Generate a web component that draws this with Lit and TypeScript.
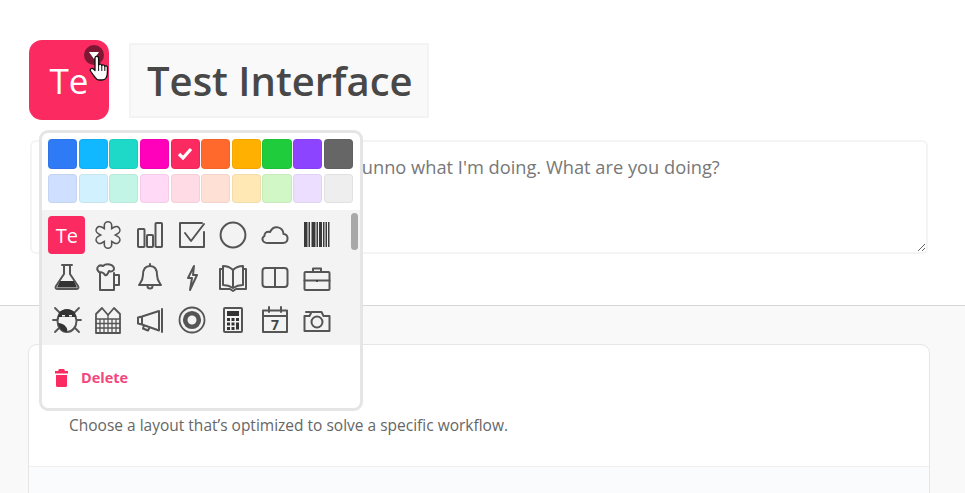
import { LitElement, html, css, svg } from "lit";
import { customElement } from "lit/decorators.js";

const BG = "#f3f3f3";
const icons = [
  svg`<path d="M16 6.500v19M7.800 11.200l16.400 9.600M24.200 11.200L7.800 20.800" stroke="#555" stroke-width="9" stroke-linecap="round"/><path d="M16 6.500v19M7.800 11.200l16.400 9.600M24.200 11.200L7.800 20.800" stroke="${BG}" stroke-width="5.800" stroke-linecap="round"/>`,
  svg`<rect x="4" y="10" width="6.500" height="18" rx=".8"/><rect x="13" y="16" width="6" height="12" rx=".8"/><rect x="21.500" y="4" width="6.500" height="24" rx=".8"/>`,
  svg`<path d="M28 13v15H4V4h22"/><path d="M9 14l6 8L28 5"/>`,
  svg`<circle cx="16" cy="16" r="12.400"/>`,
  svg`<path d="M9 24h15c6 0 6-9 .5-9C24 8 15 5 11 13c-4-1-6 2-5.500 4C2 19 3 24 9 24z"/>`,
  svg`<path fill="#3a3a3a" stroke="none" d="M3 3h3.500v25H3zM7.500 3H9v25H7.500zM10.500 3h4v25h-4zM15.500 3H17v25h-1.500zM18 3h3v25h-3zM22 3h1.500v25H22zM24.500 3H26v25h-1.500zM27 3h1.500v25H27z"/>`,
  svg`<path d="M11 3h10M13 3v9L5 24q-1.500 3 2 3h18q3.500 0 2-3l-8-12V3"/><path fill="#333" stroke="none" d="M9 19h14l3 6.500H6z"/>`,
  svg`<path d="M8 11v17h14V11M22 13h5v10h-5"/><path d="M7 10C3 6 7 2 11 4c3-3 11-2 11 3 0 2-3 3-5 2-1 2-2 5-4 4-1-2-3-3-6-3z"/>`,
  svg`<path d="M16 4c-5 0-7 4-7 9 0 5-2 7-4 10h22c-2-3-4-5-4-10 0-5-2-9-7-9z"/><path d="M13.500 24a2.500 2.500 0 0 0 5 0M16 2v2"/>`,
  svg`<path d="M18 4l-6 12h4l-2 12 7-15h-4z"/>`,
  svg`<path d="M16 8C13 5 9 4 6 4v19c4 0 7 1 10 3 3-2 6-3 10-3V4c-3 0-7 1-10 4zM16 8v18"/><path d="M6 7H3v20h10l3 2 3-2h10V7h-3"/>`,
  svg`<rect x="3.500" y="6" width="25" height="19" rx="3"/><path d="M16 6v19"/>`,
  svg`<rect x="3.500" y="10" width="25" height="18" rx="1"/><path d="M12 10V6.500h8V10M3.500 18.500h25"/><circle cx="16" cy="19" r="1" fill="#333" stroke="none"/>`,
  svg`<path d="M4 4l24 24M28 4L4 28M2 16h28" stroke-width="1.800"/><ellipse cx="16" cy="17" rx="9.500" ry="11" fill="${BG}"/><path fill="#333" stroke="none" d="M8 9c3-5 13-5 16 0l1 4H7zM7 19c3 0 6 1 8 4 2 2 1 4 1 5-5 0-8-4-9-9z"/><path fill="${BG}" stroke="none" d="M11 11h3v1.500h-3zM18 11h3v1.500h-3z"/>`,
  svg`<path d="M4 29V10l6-6 6 7 6-7 6 6v19z" stroke-width="1.800"/><path d="M4 15h24M4 19.500h24M4 24h24M8 15v14M12 15v14M16 11v18M20 15v14M24 15v14" stroke-width="1.300"/>`,
  svg`<path d="M4 13.500v6l4 1 17 6V7L8 12.500zM8 12.500v8M28 5v23M10 21.500l-1 3 5 2 1.500-3"/>`,
  svg`<circle cx="16" cy="16" r="12.500" stroke-width="1.800"/><circle cx="16" cy="16" r="6.800" stroke-width="4.600"/>`,
  svg`<rect x="7" y="4" width="18" height="24" rx="1"/><path fill="#333" stroke="none" d="M10 7h12v5H10zM10 14h3v3h-3zM14.500 14h3v3h-3zM19 14h3v3h-3zM10 18.500h3v3h-3zM14.500 18.500h3v3h-3zM19 18.500h3v7h-3zM10 23h3v3h-3zM14.500 23h3v3h-3z"/>`,
  svg`<path d="M4 6.500h24V28H4zM4 12h24M10 3v5M22 3v5"/><text x="16" y="25.500" text-anchor="middle" class="seven">7</text>`,
  svg`<path d="M3.500 12h5l2-4h10l2 4H28.500v15h-25zM5 8h4"/><circle cx="16" cy="18" r="5.500"/>`,
];

const strong = ["#2f7bf5", "#12b8ff", "#1ed8c8", "#ff00bb", "#fb2a60", "#ff6a2c", "#ffb000", "#1fcc3c", "#8c44ff", "#666666"];
const pale = ["#cfdfff", "#d0f1fd", "#c2f5e6", "#ffd9f5", "#ffdbe5", "#ffe0d5", "#ffe8b3", "#d1f7c6", "#ecdeff", "#eeeeee"];

@customElement("app-root")
export class AppRoot extends LitElement {
  static styles = css`
    :host {
      display: block;
      height: 493px;
      overflow: hidden;
      background: #fff;
      font-family: "Open Sans", sans-serif;
      position: relative;
    }
    .top { padding: 40px 37px 51px 29px; height: 305px; box-sizing: border-box; }
    .head { display: flex; align-items: center; gap: 20px; height: 80px; }
    .logo {
      position: relative;
      width: 80px; height: 80px;
      border-radius: 13px;
      background: #fb2a60;
      color: #fff;
      font-size: 35px;
      display: flex; align-items: center; justify-content: center;
      flex: none;
    }
    .toggle {
      position: absolute; left: 55px; top: 5px;
      width: 20px; height: 20px; border-radius: 50%;
      background: #7d1733;
      display: flex; align-items: center; justify-content: center;
    }
    .toggle i {
      width: 0; height: 0;
      border-left: 5px solid transparent;
      border-right: 5px solid transparent;
      border-top: 7px solid #fff;
      margin-top: 1px;
    }
    .hand { position: absolute; left: 60px; top: 15px; width: 20px; height: 26px; }
    .title {
      box-sizing: border-box;
      width: 300px; height: 75px;
      background: #f9f9f9;
      border: 2px solid #f3f3f3;
      color: #484848;
      font-size: 40px;
      font-weight: 600;
      padding: 1px 0 0 16px;
      display: flex; align-items: center;
      white-space: nowrap;
    }
    textarea {
      display: block;
      box-sizing: border-box;
      margin: 20px 0 0 1px;
      width: 898px; height: 114px;
      border: 2px solid #f4f4f4;
      border-radius: 6px;
      padding: 12px 16px;
      font: 18.250px "Open Sans", sans-serif;
      color: #777;
      background: #fff;
      outline: none;
      resize: both;
    }
    .lower {
      height: 188px;
      box-sizing: border-box;
      background: #f9f9f9;
      border-top: 1px solid #d6d6d6;
      padding: 38px 35px 0 28px;
    }
    .card {
      background: #fff;
      border: 1px solid #e6e6e6;
      border-radius: 9px 9px 0 0;
      height: 200px;
    }
    .desc {
      box-sizing: border-box;
      height: 122px;
      padding: 69px 0 0 40px;
      font-size: 15.500px;
      line-height: 22px;
      color: #666;
      border-bottom: 1px solid #f0f0f0;
    }
    .foot { height: 80px; background: #fafbfd; }
    .pop {
      position: absolute; left: 39px; top: 130px;
      box-sizing: border-box;
      width: 324px; height: 281px;
      background: #fff;
      border: 3px solid #e5e5e5;
      border-radius: 9px;
      display: flex; flex-direction: column;
      overflow: hidden;
    }
    .swatches {
      display: grid;
      grid-template-columns: repeat(10, 29.2px);
      grid-auto-rows: 29.5px;
      column-gap: 1.450px;
      row-gap: 5px;
      padding: 6px 0 7px 6px;
    }
    .sw {
      box-sizing: border-box;
      border-radius: 4px;
      border: 1px solid rgba(0,0,0,.05);
      display: flex; align-items: center; justify-content: center;
    }
    .sw svg { width: 16px; height: 13px; }
    .grid {
      position: relative;
      box-sizing: border-box;
      height: 135px;
      background: #f3f3f3;
      padding: 4px 0 0 4px;
      display: grid;
      grid-template-columns: repeat(7, 41.67px);
      grid-auto-rows: 42.5px;
      justify-items: center;
      align-items: center;
    }
    .grid svg {
      width: 32px; height: 32px;
      fill: none; stroke: #555; stroke-width: 2;
      stroke-linejoin: round; stroke-linecap: round;
    }
    .seven { font: 700 14px "Open Sans", sans-serif; fill: #444; stroke: none; }
    .tile {
      width: 37px; height: 38px; border-radius: 4px;
      background: #fb2a60; color: #fff;
      font-size: 20px;
      display: flex; align-items: center; justify-content: center;
    }
    .thumb {
      position: absolute; left: 309px; top: 3px;
      width: 7px; height: 37px; border-radius: 4px;
      background: #a8a8a8;
    }
    .del {
      flex: 1;
      display: flex; align-items: center; gap: 13px;
      padding: 2px 0 0 13px;
      color: #f0487c;
      font-size: 14.500px;
      font-weight: 700;
    }
    .del svg { width: 13px; height: 18px; flex: none; }
  `;

  render() {
    return html`
      <div class="top">
        <div class="head">
          <div class="logo">
            Te
            <span class="toggle"><i></i></span>
            <svg class="hand" viewBox="0 0 20 26">
              <path fill="#fff" stroke="#111" stroke-width="1.300" stroke-linejoin="round" d="M6 3.200C6 .8 9.600 .8 9.600 3.200V10C10 8.600 12.600 8.800 12.800 10.600 13.200 9.400 15.600 9.600 15.800 11.400 16.400 10.400 18.400 10.800 18.400 12.600V17C18.400 21 17 25 13 25H10C7.500 25 6.500 23 5 21L1.500 16C.5 14 3 12.500 4.500 14L6 15.500Z"/>
              <path fill="none" stroke="#111" stroke-width="1" d="M9.600 10v6M12.800 10.600V16M15.800 11.400V16"/>
            </svg>
          </div>
          <div class="title">Test Interface</div>
        </div>
        <textarea>I am just testing this interface and I dunno what I'm doing. What are you doing?</textarea>
      </div>
      <div class="lower">
        <div class="card">
          <div class="desc">Choose a layout that’s optimized to solve a specific workflow.</div>
          <div class="foot"></div>
        </div>
      </div>
      <div class="pop">
        <div class="swatches">
          ${strong.map((c, i) => html`<div class="sw" style="background:${c}">${i === 4
            ? html`<svg viewBox="0 0 16 13"><path d="M2 7l4 4 8-9" fill="none" stroke="#fff" stroke-width="3.200"/></svg>`
            : ""}</div>`)}
          ${pale.map((c) => html`<div class="sw" style="background:${c}"></div>`)}
        </div>
        <div class="grid">
          <div class="tile">Te</div>
          ${icons.map((i) => html`<svg viewBox="0 0 32 32">${i}</svg>`)}
          <div class="thumb"></div>
        </div>
        <div class="del">
          <svg viewBox="0 0 13 18"><path fill="#fb2a60" d="M4 0h5l1 2h3v2.500H0V2h3zM1 6h11v10.500a1.500 1.500 0 0 1-1.500 1.500h-8A1.500 1.500 0 0 1 1 16.500z"/></svg>
          Delete
        </div>
      </div>
    `;
  }
}
